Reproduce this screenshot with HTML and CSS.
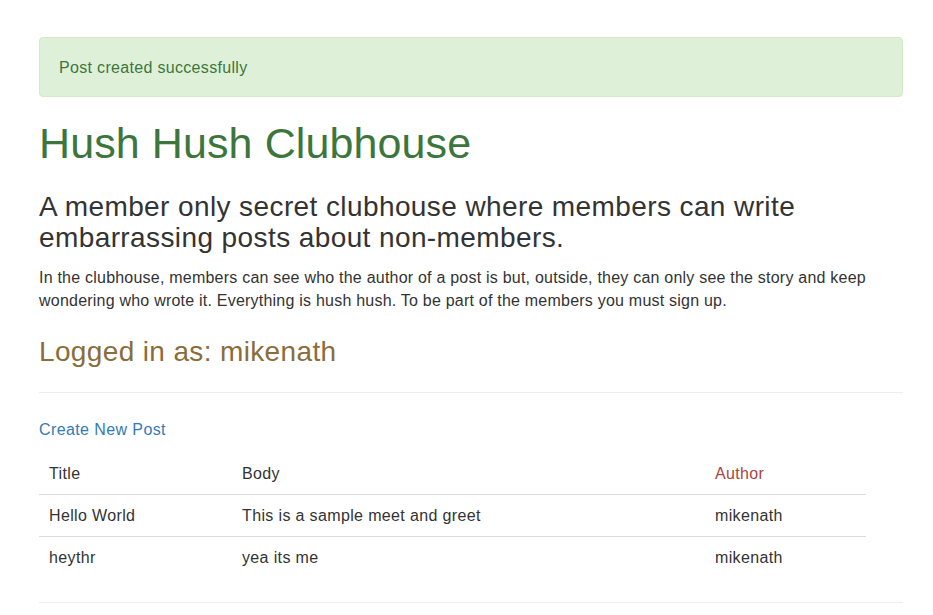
FILE: index.html
```html
<!DOCTYPE html>
<html>
<head>
<meta charset="utf-8">
<title>Hush Hush Clubhouse</title>
<link rel="stylesheet" href="styles.css">
</head>
<body>
<div class="page">
  <div class="alert">Post created successfully</div>
  <h1 class="title">Hush Hush Clubhouse</h1>
  <h2 class="lead">A member only secret clubhouse where members can write embarrassing posts about non-members.</h2>
  <p class="intro">In the clubhouse, members can see who the author of a post is but, outside, they can only see the story and keep wondering who wrote it. Everything is hush hush. To be part of the members you must sign up.</p>
  <h3 class="logged">Logged in as: mikenath</h3>
  <div class="rule rule-top"></div>
  <a class="create" href="#">Create New Post</a>
  <table class="posts">
    <thead>
      <tr>
        <th class="c-title">Title</th>
        <th class="c-body">Body</th>
        <th class="c-author author-head">Author</th>
      </tr>
    </thead>
    <tbody>
      <tr>
        <td>Hello World</td>
        <td>This is a sample meet and greet</td>
        <td>mikenath</td>
      </tr>
      <tr>
        <td>heythr</td>
        <td>yea its me</td>
        <td>mikenath</td>
      </tr>
    </tbody>
  </table>
  <div class="rule rule-bottom"></div>
</div>
</body>
</html>
```

FILE: styles.css
```css
html, body {
  margin: 0;
  padding: 0;
  background: #fff;
}

body {
  font-family: "Liberation Sans", Arial, Helvetica, sans-serif;
  font-size: 16px;
  line-height: 1.42857;
  color: #333;
  letter-spacing: 0.36px;
}

.page {
  width: 864px;
  margin: 37px 0 0 39px;
}

.alert {
  padding: 19px 19px 17px;
  line-height: 22px;
  background: #dff0d8;
  border: 1px solid #d6e9c6;
  border-radius: 4px;
  color: #3c763d;
  letter-spacing: 0.32px;
}

.title {
  margin: 23px 0 0;
  font-size: 43px;
  font-weight: 400;
  line-height: 1.1;
  color: #3c763d;
  letter-spacing: 0.1px;
}

.lead {
  margin: 25px 0 0;
  font-size: 28px;
  font-weight: 400;
  line-height: 1.1;
  color: #333;
  letter-spacing: 0.4px;
}

.intro {
  margin: 13px 0 0;
  letter-spacing: 0.22px;
}

.logged {
  margin: 24px 0 0;
  font-size: 28px;
  font-weight: 400;
  line-height: 1.1;
  color: #8a6d3b;
  letter-spacing: 0.36px;
}

.rule {
  border-top: 1px solid #eee;
}

.rule-top {
  margin-top: 25px;
}

.create {
  display: block;
  width: max-content;
  margin-top: 26px;
  color: #337ab7;
  text-decoration: none;
  letter-spacing: 0.4px;
}

.posts {
  margin-top: 11px;
  width: 827px;
  border-collapse: collapse;
}

.posts th,
.posts td {
  padding: 10px 10px 8px;
  text-align: left;
  font-weight: 400;
  vertical-align: top;
}

.posts thead th {
  border-bottom: 1px solid #ddd;
}

.posts tbody tr:first-child td {
  border-bottom: 1px solid #ddd;
}

.c-title { width: 173px; }
.c-body { width: 453px; }
.c-author { width: 141px; }

.author-head {
  color: #a94442;
}

.rule-bottom {
  margin-top: 24px;
  margin-bottom: 12px;
}
```
